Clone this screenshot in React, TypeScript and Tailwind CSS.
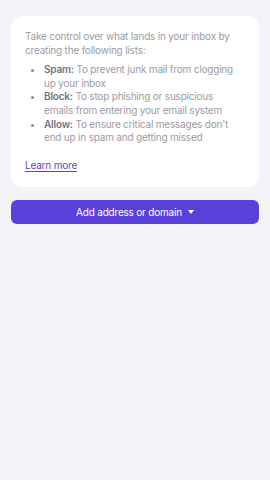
import React from 'react';

const ITEMS = [
  { label: 'Spam:', text: 'To prevent junk mail from clogging up your inbox' },
  { label: 'Block:', text: 'To stop phishing or suspicious emails from entering your email system' },
  { label: 'Allow:', text: "To ensure critical messages don't end up in spam and getting missed" },
];

export default function App() {
  return (
    <div
      className="min-h-[480px] w-[270px] bg-[#f3f4f8] px-[11px] pt-4"
      style={{ fontFamily: 'Inter, "Noto Sans", sans-serif' }}
    >
      <div className="rounded-xl bg-white pl-[14px] pr-[20px] pt-[14px] pb-[15px] text-[10px] leading-[13.6px] tracking-[-0.2px] text-[#9b9ba3]">
        <p>Take control over what lands in your inbox by creating the following lists:</p>
        <ul className="mt-[6px] list-disc pl-[19px] marker:text-[#8a8a92]">
          {ITEMS.map((item) => (
            <li key={item.label}>
              <span className="font-semibold text-[#74747c]">{item.label}</span> {item.text}
            </li>
          ))}
        </ul>
        <a href="#" className="mt-[14px] inline-block text-[#5b45c9] underline underline-offset-2">
          Learn more
        </a>
      </div>

      <button className="mt-[13px] flex h-[24px] w-full items-center justify-center gap-[6px] rounded-md bg-[#5a3fd9] text-[10px] tracking-[-0.2px] text-white">
        Add address or domain
        <svg width="6" height="4" viewBox="0 0 6 4" fill="currentColor">
          <path d="M0 0h6L3 4z" />
        </svg>
      </button>
    </div>
  );
}
